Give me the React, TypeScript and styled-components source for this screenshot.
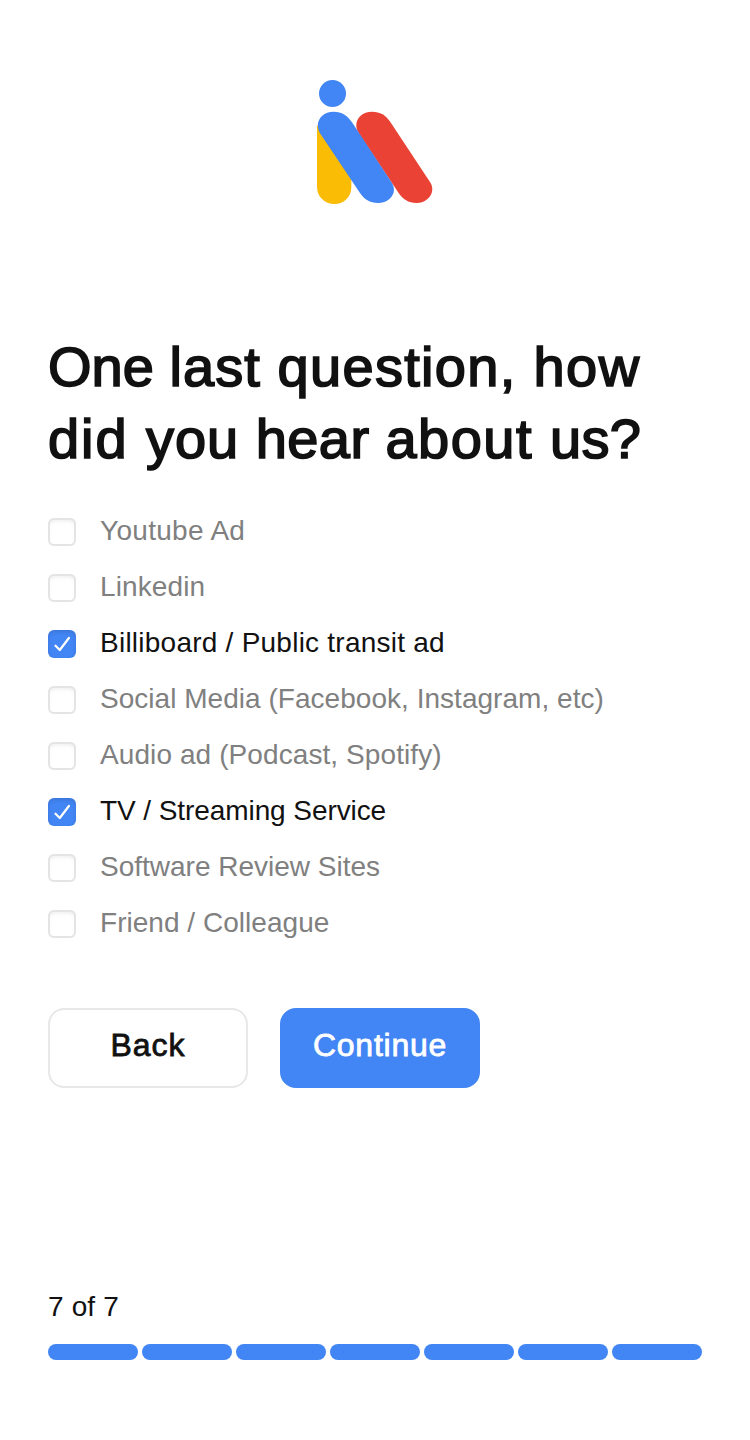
import { useState } from "react";
import styled, { createGlobalStyle } from "styled-components";

const blue = "#4285f4";
const ink = "#111111";

const GlobalStyle = createGlobalStyle`
  *, *::before, *::after { box-sizing: border-box; }
  body { margin: 0; background: #ffffff; }
`;

const Page = styled.main`
  display: flex;
  flex-direction: column;
  width: 750px;
  height: 1440px;
  padding: 80px 48px;
  background: #ffffff;
  color: ${ink};
  font-family: "Liberation Sans", Arial, sans-serif;
`;

const Logo = styled.svg`
  display: block;
  align-self: center;
  width: 116px;
  height: 124px;
`;

const Title = styled.h1`
  margin: 127px 0 0;
  font-size: 56px;
  line-height: 72px;
  font-weight: 400;
  white-space: nowrap;
  -webkit-text-stroke: 1.7px ${ink};
`;

const TitleLine = styled.span`
  display: block;
`;

const Word = styled.span<{ $tracking: number }>`
  letter-spacing: ${(p) => p.$tracking}px;
`;

const Options = styled.div`
  display: flex;
  flex-direction: column;
  gap: 20px;
  margin-top: 38px;
`;

const Option = styled.label<{ $checked: boolean }>`
  display: flex;
  align-items: flex-start;
  gap: 24px;
  height: 36px;
  font-size: 28px;
  line-height: 36px;
  color: ${(p) => (p.$checked ? ink : "#808080")};
  cursor: pointer;
`;

const HiddenInput = styled.input`
  position: absolute;
  opacity: 0;
  pointer-events: none;
`;

const Box = styled.span<{ $checked: boolean }>`
  display: flex;
  flex: none;
  width: 28px;
  height: 28px;
  margin-top: 5px;
  border-radius: 6px;
  background: ${(p) => (p.$checked ? blue : "#ffffff")};
  box-shadow: ${(p) =>
    p.$checked
      ? "inset 0 2px 4px rgba(0, 0, 0, 0.12)"
      : "inset 0 0 0 2px #e4e4e4, inset 0 3px 4px rgba(0, 0, 0, 0.08)"};
`;

const OptionText = styled.span<{ $tracking: number }>`
  letter-spacing: ${(p) => p.$tracking}px;
  white-space: nowrap;
`;

const Actions = styled.div`
  display: flex;
  gap: 32px;
  margin-top: 67px;
`;

const Button = styled.button<{ $primary?: boolean }>`
  width: 200px;
  height: 80px;
  padding: 0 0 7px;
  border: 2px solid ${(p) => (p.$primary ? blue : "#e8e8e8")};
  border-radius: 16px;
  background: ${(p) => (p.$primary ? blue : "#ffffff")};
  color: ${(p) => (p.$primary ? "#ffffff" : ink)};
  font: 400 32px/40px "Liberation Sans", Arial, sans-serif;
  letter-spacing: ${(p) => (p.$primary ? 0.75 : 1)}px;
  -webkit-text-stroke: 0.8px currentColor;
`;

const Progress = styled.footer`
  margin-top: auto;
`;

const Step = styled.div`
  font-size: 28px;
  line-height: 36px;
  letter-spacing: 0.15px;
`;

const Segments = styled.div`
  display: flex;
  gap: 4px;
  margin-top: 19px;
`;

const Segment = styled.span`
  width: 90px;
  height: 16px;
  border-radius: 8px;
  background: ${blue};
`;

const titleLines = [
  [
    { text: "One ", tracking: 0 },
    { text: "last ", tracking: 1.1 },
    { text: "question, ", tracking: 1.3 },
    { text: "how", tracking: 1.5 },
  ],
  [
    { text: "did ", tracking: 1.9 },
    { text: "you ", tracking: 1 },
    { text: "hear ", tracking: 0.4 },
    { text: "about ", tracking: 1.5 },
    { text: "us?", tracking: 0.2 },
  ],
];

const options = [
  { text: "Youtube Ad", tracking: 0.3 },
  { text: "Linkedin", tracking: 0.12 },
  { text: "Billiboard / Public transit ad", tracking: 0.24 },
  { text: "Social Media (Facebook, Instagram, etc)", tracking: 0.03 },
  { text: "Audio ad (Podcast, Spotify)", tracking: 0.09 },
  { text: "TV / Streaming Service", tracking: -0.08 },
  { text: "Software Review Sites", tracking: 0 },
  { text: "Friend / Colleague", tracking: 0.03 },
];

const totalSteps = 7;

export default function App() {
  const [selected, setSelected] = useState<number[]>([2, 5]);
  const toggle = (i: number) =>
    setSelected((s) => (s.includes(i) ? s.filter((n) => n !== i) : [...s, i]));

  return (
    <>
      <GlobalStyle />
      <Page>
        <Logo viewBox="36 30 348 372" aria-hidden="true">
          <path d="M36 165V351C36 380 59 402 88 402C118 402 139 380 139 351V320Z" fill="#fbbc05" />
          <path d="M201 125C226 125 242 135 256 156L375 336C394 365 371 399 334 399C310 399 294 388 281 369L162 191C141 159 163 125 201 125Z" fill="#ea4335" />
          <path d="M86 125C111 125 127 136 141 157L259 336C280 367 256 399 219 399C194 399 178 388 165 369L46 191C26 159 48 125 86 125Z" fill={blue} />
          <circle cx="82.500" cy="70.500" r="40.500" fill={blue} />
        </Logo>
        <Title>
          {titleLines.map((line, i) => (
            <TitleLine key={i}>
              {line.map(({ text, tracking }) => (
                <Word key={text} $tracking={tracking}>{text}</Word>
              ))}
            </TitleLine>
          ))}
        </Title>
        <Options>
          {options.map(({ text, tracking }, i) => {
            const checked = selected.includes(i);
            return (
              <Option key={text} $checked={checked}>
                <HiddenInput type="checkbox" checked={checked} onChange={() => toggle(i)} />
                <Box $checked={checked}>
                  {checked && (
                    <svg width="28" height="28" viewBox="0 0 28 28" fill="none">
                      <path d="M7.500 15.700L11.800 20L20.900 8" stroke="#ffffff" strokeWidth="2.200" strokeLinecap="round" strokeLinejoin="round" />
                    </svg>
                  )}
                </Box>
                <OptionText $tracking={tracking}>{text}</OptionText>
              </Option>
            );
          })}
        </Options>
        <Actions>
          <Button type="button">Back</Button>
          <Button type="button" $primary>Continue</Button>
        </Actions>
        <Progress>
          <Step>7 of 7</Step>
          <Segments>
            {Array.from({ length: totalSteps }, (_, i) => (
              <Segment key={i} />
            ))}
          </Segments>
        </Progress>
      </Page>
    </>
  );
}
